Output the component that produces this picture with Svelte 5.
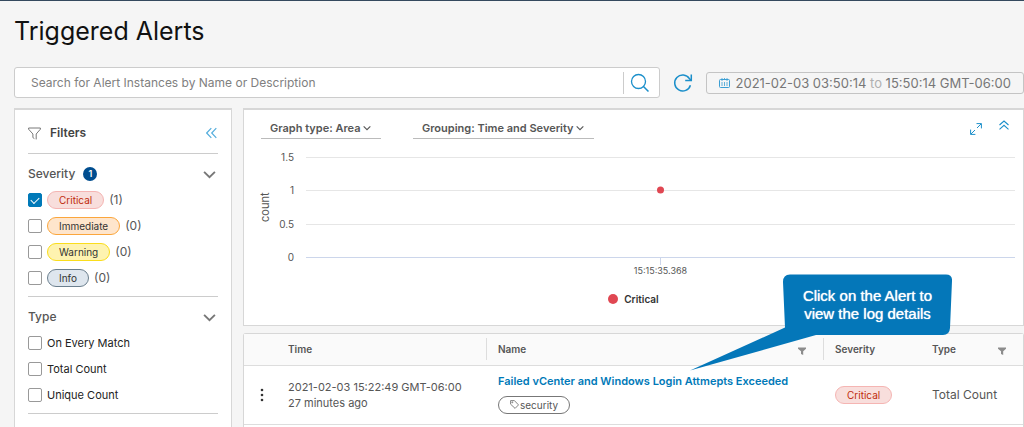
<script>
  let query = $state('');
  let severities = $state([
    { name: 'Critical', tone: 'critical', count: 1, checked: true },
    { name: 'Immediate', tone: 'immediate', count: 0, checked: false },
    { name: 'Warning', tone: 'warning', count: 0, checked: false },
    { name: 'Info', tone: 'info', count: 0, checked: false }
  ]);
  let types = $state([
    { name: 'On Every Match', checked: false },
    { name: 'Total Count', checked: false },
    { name: 'Unique Count', checked: false }
  ]);
  let selected = $derived(severities.filter((s) => s.checked).length);
  const ticks = ['1.5', '1', '0.5', '0'];
  const gridLines = [0, 33, 67];
</script>

{#snippet chevron(size)}
  <svg class="chevron" width={size} height={size} viewBox="0 0 12 12" aria-hidden="true">
    <path d="M1 3.5 6 8.5 11 3.5" fill="none" stroke="currentColor" stroke-width="1.7" />
  </svg>
{/snippet}

{#snippet filterMark()}
  <svg width="8" height="8" viewBox="0 0 8 8" aria-hidden="true">
    <path d="M0 0.5h8v1.3L5.2 4.2V8L3 7V4.2L0 1.8z" fill="#8c8c8c" />
  </svg>
{/snippet}

<div class="page">
  <header>
    <h1>Triggered Alerts</h1>
    <div class="toolbar">
      <form class="search" onsubmit={(e) => e.preventDefault()}>
        <input type="text" aria-label="Search alerts" placeholder="Search for Alert Instances by Name or Description" bind:value={query} />
        <button class="icon go" aria-label="Search">
          <svg width="20" height="20" viewBox="0 0 20 20" fill="none" stroke="#1b8fca">
            <circle cx="8.5" cy="8.5" r="7" stroke-width="1.3" />
            <path d="M13.5 13.5 18.5 18.5" stroke-width="1.5" />
          </svg>
        </button>
      </form>
      <button class="icon" aria-label="Refresh">
        <svg width="20" height="20" viewBox="0 0 20 20" fill="none" stroke="#1b8fca" stroke-width="1.5">
          <path d="M17.4 12.2A8 8 0 1 1 16.4 5.6L18 7.4" />
          <path d="M18.3 1.5V7.4H12.2" />
        </svg>
      </button>
      <button class="range">
        <svg width="11" height="10" viewBox="0 0 11 10" fill="none" stroke="#3b9ed3" aria-hidden="true">
          <rect x="0.5" y="1.5" width="10" height="8" rx="1" />
          <path d="M3 0V3M5.5 0V2M8 0V3M3 4V8M5.5 4V8M8 4V8" stroke-width="0.8" />
        </svg>
        <span>2021-02-03 03:50:14 <i>to</i> 15:50:14 GMT-06:00</span>
      </button>
    </div>
  </header>

  <div class="columns">
    <aside class="panel">
      <div class="filters-head">
        <svg width="13" height="13" viewBox="0 0 13 13" fill="none" stroke="#6a6a6a" stroke-width="0.9" aria-hidden="true">
          <path d="M0.6 1h11.8v1.2L8.2 7v5.4M0.6 1v1.2L4.9 7v3.6L6.4 11.6" />
        </svg>
        <h2>Filters</h2>
        <button class="icon" aria-label="Collapse filters">
          <svg width="12" height="12" viewBox="0 0 12 12" fill="none" stroke="#55aedd" stroke-width="1.2">
            <path d="M5.3 1.2 0.7 6 5.3 10.8M10.3 1.2 5.700 6 10.3 10.8" />
          </svg>
        </button>
      </div>

      <section>
        <button class="group">Severity <span class="badge">{selected}</span>{@render chevron(13)}</button>
        {#each severities as s}
          <label>
            <input type="checkbox" bind:checked={s.checked} />
            <span class="pill {s.tone}">{s.name}</span>
            <span class="count">({s.count})</span>
          </label>
        {/each}
      </section>

      <section>
        <button class="group">Type {@render chevron(13)}</button>
        {#each types as t}
          <label class="plain">
            <input type="checkbox" bind:checked={t.checked} />
            {t.name}
          </label>
        {/each}
      </section>
    </aside>

    <main>
      <section class="panel chart">
        <div class="chart-head">
          <div class="pick">
            <select aria-label="Graph type"><option>Graph type: Area</option></select>
            {@render chevron(8)}
          </div>
          <div class="pick">
            <select aria-label="Grouping"><option>Grouping: Time and Severity</option></select>
            {@render chevron(8)}
          </div>
          <div class="tools">
            <button class="icon" aria-label="Expand">
              <svg width="12" height="12" viewBox="0 0 12 12" fill="none" stroke="#1b8fca" stroke-width="1">
                <path d="M6.5 0.6H11.4V5.4M11.2 0.8 7 5M5.4 11.4H0.6V6.6M0.8 11.2 5 7" />
              </svg>
            </button>
            <button class="icon raised" aria-label="Collapse chart">
              <svg width="10" height="10" viewBox="0 0 10 10" fill="none" stroke="#1b8fca" stroke-width="1.1">
                <path d="M0.5 5 5 1 9.5 5M0.5 9.3 5 5.3 9.5 9.3" />
              </svg>
            </button>
          </div>
        </div>
        <div class="plot">
          <span class="axis">count</span>
          <div class="ticks">
            {#each ticks as t}<span>{t}</span>{/each}
          </div>
          <div class="area">
            <svg width="100%" height="108" aria-label="Alert count over time">
              {#each gridLines as y}
                <line x1="0" x2="100%" y1={y + 0.5} y2={y + 0.5} stroke="#e6e6e6" />
              {/each}
              <line x1="0" x2="100%" y1="100.5" y2="100.5" stroke="#ccd6eb" />
              <line x1="50%" x2="50%" y1="100" y2="108" stroke="#ccd6eb" />
              <circle cx="50%" cy="33" r="3.5" fill="#e04752" />
            </svg>
            <span class="moment">15:15:35.368</span>
          </div>
        </div>
        <div class="legend"><span class="dot"></span>Critical</div>
      </section>

      <section class="panel list">
        <table>
          <colgroup>
            <col class="c-menu" /><col class="c-time" /><col /><col class="c-sev" /><col class="c-type" />
          </colgroup>
          <thead>
            <tr>
              <th></th>
              <th><div class="th">Time</div></th>
              <th><div class="th split">Name {@render filterMark()}</div></th>
              <th><div class="th split">Severity</div></th>
              <th><div class="th">Type {@render filterMark()}</div></th>
            </tr>
          </thead>
          <tbody>
            <tr>
              <td>
                <button class="icon" aria-label="Row actions">
                  <svg width="4" height="14" viewBox="0 0 4 14" fill="#333">
                    <circle cx="2" cy="2" r="1.3" /><circle cx="2" cy="7" r="1.3" /><circle cx="2" cy="12" r="1.3" />
                  </svg>
                </button>
              </td>
              <td class="time">2021-02-03 15:22:49 GMT-06:00<br />27 minutes ago</td>
              <td class="name">
                <a href="#alert">Failed vCenter and Windows Login Attmepts Exceeded</a>
                <span class="tag">
                  <svg width="9" height="9" viewBox="0 0 9 9" fill="none" stroke="#666" stroke-width="0.8" aria-hidden="true">
                    <path d="M0.6 0.6H4.4L8.5 4.9 5.1 8.4 0.6 4.2z" /><circle cx="2.3" cy="2.3" r="0.5" />
                  </svg>security
                </span>
                <div class="callout">
                  <svg width="262" height="97" viewBox="0 0 262 97" aria-hidden="true">
                    <path d="M100 0.5H256Q262.5 0.5 262 7L260 54Q259.5 61 253 61H126L0 96.5 95 53.5 93 8Q93 0.5 100 0.5z" fill="#0477b9" />
                  </svg>
                  <p>Click on the Alert to<br />view the log details</p>
                </div>
              </td>
              <td class="sev"><span class="pill critical">Critical</span></td>
              <td>Total Count</td>
            </tr>
          </tbody>
        </table>
      </section>
    </main>
  </div>
</div>

<style>
  :global(body) {
    margin: 0;
    background: #f5f5f5;
  }
  .page,
  .page * {
    box-sizing: border-box;
  }
  .page {
    min-height: 100vh;
    display: flex;
    flex-direction: column;
    padding-left: 14px;
    border-top: 1px solid #34495e;
    font: 12px/16px Inter, 'Open Sans', sans-serif;
    color: #565656;
  }
  button,
  input,
  select {
    font: inherit;
    color: inherit;
    margin: 0;
    padding: 0;
    border: 0;
    background: none;
  }
  svg {
    display: block;
    flex: none;
  }
  .icon {
    display: flex;
    flex: none;
  }
  h1 {
    margin: 0;
    padding: 14px 0 20px;
    font-size: 25px;
    line-height: 32px;
    font-weight: 400;
    color: #111;
  }
  .toolbar {
    display: flex;
    align-items: center;
    gap: 13px;
    margin-bottom: 10px;
  }
  .search {
    flex: 1;
    display: flex;
    align-items: center;
    height: 31px;
    padding-left: 16px;
    background: #fff;
    border: 1px solid #ccc;
    border-radius: 3px;
  }
  .search input {
    flex: 1;
    min-width: 0;
    outline: 0;
  }
  .search input::placeholder {
    color: #808080;
    opacity: 1;
  }
  .go {
    padding: 1px 9px 1px 6px;
    border-left: 1px solid #ccc;
  }
  .range {
    display: flex;
    align-items: center;
    gap: 6px;
    height: 22px;
    padding: 0 12px;
    border: 1px solid #c4c4c4;
    border-radius: 3px;
    font-size: 13px;
    color: #777;
    white-space: nowrap;
  }
  .range i {
    font-style: normal;
    color: #b0b0b0;
  }
  .columns {
    flex: 1;
    display: grid;
    grid-template-columns: 218px minmax(0, 1fr);
    gap: 11px;
  }
  .panel {
    background: #fff;
    border: 1px solid #d7d7d7;
  }
  aside.panel {
    border-top-width: 2px;
    border-bottom: 0;
    padding: 0 13px;
  }
  .filters-head {
    display: flex;
    align-items: center;
    gap: 9px;
    height: 44px;
    padding-top: 3px;
    border-bottom: 1px solid #ccc;
  }
  h2 {
    flex: 1;
    margin: 0;
    font-size: 12px;
    font-weight: 600;
    color: #444;
  }
  aside section {
    padding: 9px 0 5px;
    border-bottom: 1px solid #ccc;
  }
  .group {
    display: flex;
    align-items: center;
    width: 100%;
    height: 22px;
    margin-bottom: 2px;
    gap: 8px;
    font-weight: 500;
  }
  .group .chevron {
    margin-left: auto;
    margin-right: 2px;
    color: #777;
  }
  .badge {
    width: 14px;
    height: 14px;
    border-radius: 50%;
    background: #004d8f;
    color: #fff;
    font-size: 9px;
    line-height: 14px;
    font-weight: 600;
    text-align: center;
  }
  label {
    display: flex;
    align-items: center;
    height: 26px;
    gap: 5px;
  }
  .plain {
    color: #222;
    font-size: 11px;
  }
  input[type='checkbox'] {
    appearance: none;
    width: 14px;
    height: 14px;
    border: 1px solid #999;
    border-radius: 2px;
    background: #fff;
  }
  input[type='checkbox']:checked {
    border-color: #0079b8;
    background: #0079b8;
    display: grid;
    place-items: center;
  }
  input[type='checkbox']:checked::after {
    content: '';
    width: 7px;
    height: 4px;
    margin-bottom: 2px;
    border: solid #fff;
    border-width: 0 0 1px 1px;
    transform: rotate(-45deg);
  }
  .pill {
    display: inline-block;
    height: 18px;
    padding: 0 11px;
    border: 1px solid;
    border-radius: 9px;
    font-size: 10px;
    line-height: 16px;
    color: #333;
  }
  .critical {
    background: #f8dedc;
    border-color: #f5b5b3;
    color: #c02b0a;
  }
  .immediate {
    background: #fee5cc;
    border-color: #fba63c;
  }
  .warning {
    background: #fef3b0;
    border-color: #fadd1c;
  }
  .info {
    background: #dee6ee;
    border-color: #6b7f8e;
  }
  main {
    display: flex;
    flex-direction: column;
    gap: 7px;
    min-width: 0;
  }
  .chart {
    border-top-width: 2px;
    padding-bottom: 18px;
  }
  .chart-head {
    display: flex;
    gap: 32px;
    padding: 8px 14px 0 17px;
  }
  .pick {
    display: flex;
    align-items: center;
    gap: 2px;
    height: 21px;
    padding: 0 10px 0 9px;
    border-bottom: 1px solid #bbb;
    font-size: 11px;
    font-weight: 600;
  }
  select {
    appearance: none;
    outline: 0;
  }
  .pick .chevron {
    pointer-events: none;
  }
  .tools {
    margin-left: auto;
    display: flex;
    align-items: center;
    gap: 17px;
  }
  .raised {
    margin-bottom: 8px;
  }
  .plot {
    display: flex;
    padding: 11px 8px 0 14px;
  }
  .axis {
    width: 14px;
    height: 114px;
    writing-mode: vertical-rl;
    transform: rotate(180deg);
    line-height: 14px;
    font-size: 11px;
    text-align: center;
  }
  .ticks {
    width: 22px;
    height: 114px;
    display: flex;
    flex-direction: column;
    justify-content: space-between;
    align-items: flex-end;
    font-size: 10px;
    line-height: 14px;
  }
  .area {
    flex: 1;
    min-width: 0;
    margin-left: 12px;
    padding-top: 7px;
    text-align: center;
    font-size: 9px;
    line-height: 12px;
  }
  .moment {
    display: block;
  }
  .legend {
    display: flex;
    justify-content: center;
    align-items: center;
    gap: 6px;
    padding-top: 14px;
    font-size: 10px;
    line-height: 16px;
    font-weight: 600;
    color: #333;
  }
  .dot {
    width: 10px;
    height: 10px;
    border-radius: 50%;
    background: #e04752;
  }
  .list {
    flex: 1;
    border-bottom: 0;
    border-radius: 3px 3px 0 0;
  }
  table {
    width: 100%;
    border-collapse: collapse;
    table-layout: fixed;
  }
  .c-menu {
    width: 32px;
  }
  .c-time {
    width: 210px;
  }
  .c-sev {
    width: 97px;
  }
  .c-type {
    width: 103px;
  }
  thead tr {
    background: #fafafa;
  }
  th {
    height: 31px;
    padding: 0;
    border-bottom: 1px solid #ddd;
    font-size: 10px;
    font-weight: 600;
    text-align: left;
  }
  .th {
    display: flex;
    align-items: center;
    justify-content: space-between;
    height: 22px;
    padding: 0 17px 1px 12px;
  }
  .th svg {
    margin-top: 4px;
  }
  .split {
    padding-left: 11px;
    border-left: 1px solid #ddd;
  }
  td {
    height: 59px;
    padding: 0 0 0 12px;
    border-bottom: 1px solid #ddd;
  }
  td .icon {
    margin-left: 4px;
  }
  .time {
    font-size: 11px;
  }
  td.name {
    position: relative;
    padding-top: 7px;
    vertical-align: top;
    white-space: nowrap;
  }
  a {
    display: block;
    margin-bottom: 7px;
    font-size: 11px;
    font-weight: 600;
    color: #0079b8;
    text-decoration: none;
  }
  .tag {
    display: inline-flex;
    align-items: center;
    gap: 1px;
    height: 18px;
    padding: 0 11px;
    border: 1px solid #777;
    border-radius: 9px;
    font-size: 10px;
    vertical-align: top;
  }
  .callout {
    position: absolute;
    left: 204px;
    bottom: 53px;
    z-index: 1;
  }
  .callout p {
    position: absolute;
    top: 13px;
    left: 93px;
    right: 0;
    margin: 0;
    text-align: center;
    font: 15px/18px 'Liberation Sans', Arial, sans-serif;
    color: #fff;
    text-shadow: 0 0 1px #fff;
  }
</style>
